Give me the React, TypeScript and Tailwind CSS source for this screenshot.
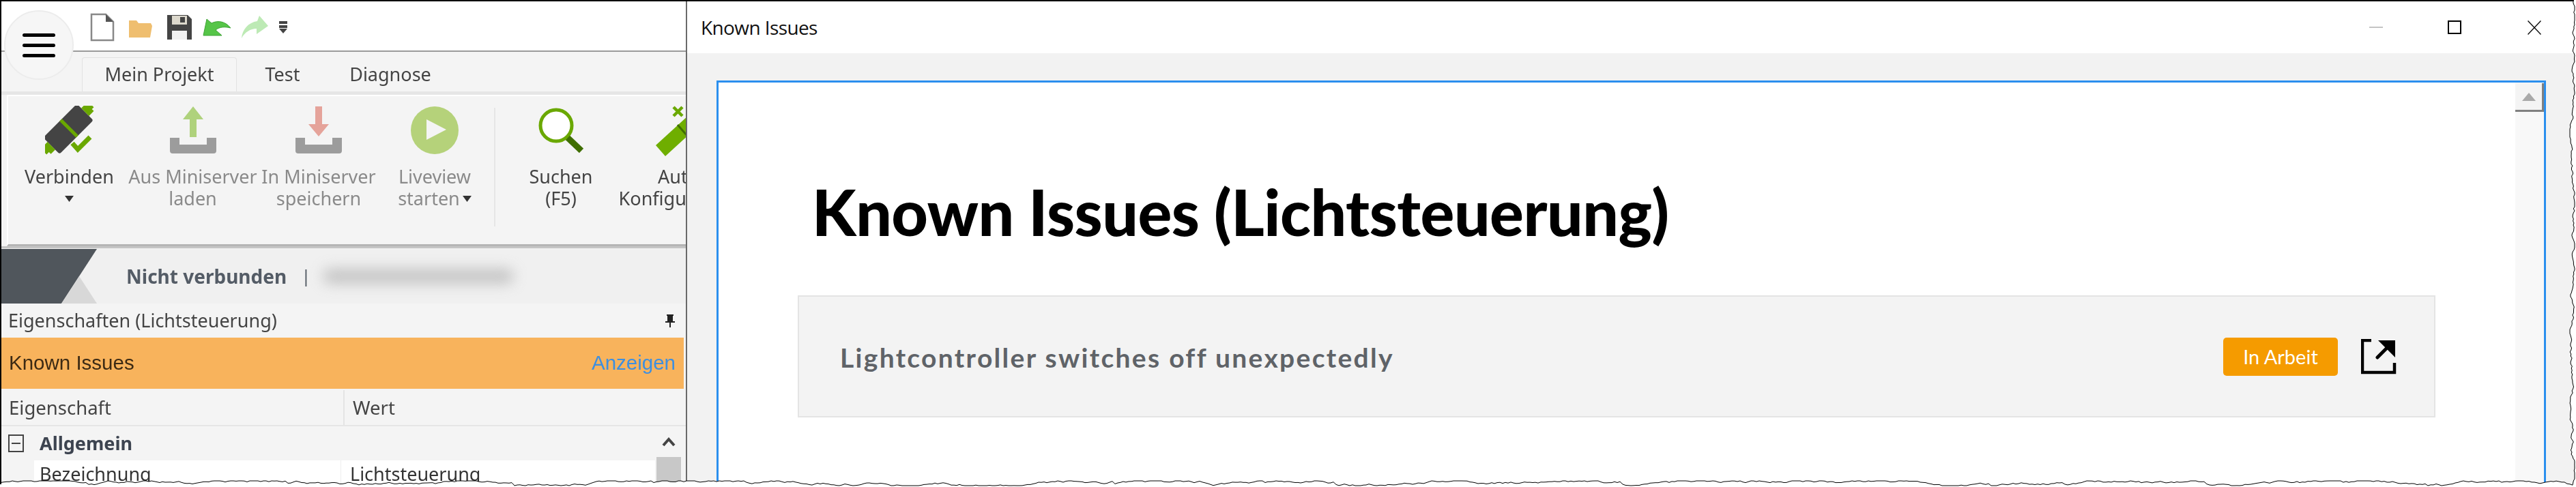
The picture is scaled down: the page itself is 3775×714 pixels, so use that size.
import React from "react";

const UI = "font-['Noto_Sans','Open_Sans',sans-serif]";

function tornPath() {
  let s = 12345;
  const r = () => {
    s = (s * 1103515245 + 12345) & 0x7fffffff;
    return s / 0x7fffffff;
  };
  let d = "M0 0 L3771 0 ";
  let x = 3771;
  for (let y = 0; y < 708; y += 3) {
    x += (r() - 0.5) * 4;
    x = Math.max(3766, Math.min(3773, x));
    d += `L${x.toFixed(1)} ${y} `;
  }
  let y = 710;
  for (let px = 3770; px > 0; px -= 4) {
    y += (r() - 0.5) * 3;
    if (r() > 0.95) y -= 3;
    y = Math.max(705, Math.min(712, y));
    d += `L${px} ${y.toFixed(1)} `;
  }
  d += "L0 710 Z";
  return d;
}

const Tray = () => (
  <path d="M2 1 V20 Q2 24 6 24 H66 Q70 24 70 20 V1 H56 V11 H16 V1 Z" fill="#9c9c9c" />
);

function RibbonButton({ icon, lines, dim, width, caret }: { icon: React.ReactNode; lines: string[]; dim?: boolean; width: string; caret?: boolean }) {
  return (
    <div className={`flex flex-col items-center shrink-0 ${width}`}>
      <div className="h-[88px] flex items-start justify-center">{icon}</div>
      <div className={`text-[27px] leading-[32px] text-center whitespace-nowrap ${dim ? "text-[#8a8a8a]" : "text-[#444]"}`}>
        {lines.map((l, i) => (
          <div key={i} className="h-[32px] flex items-center justify-center gap-1">
            {l}
            {caret && i === lines.length - 1 && (
              <svg width="13" height="9" viewBox="0 0 13 9"><path d="M0 0H13L6.5 9Z" fill="#333" /></svg>
            )}
          </div>
        ))}
      </div>
    </div>
  );
}

function LeftApp() {
  return (
    <div className={`w-[1003px] shrink-0 flex flex-col overflow-hidden bg-[#f4f4f4] ${UI} blur-[0.5px] relative`}>
      <div className="h-[74px] pt-[3px] bg-white border-b-2 border-[#9a9a9a] flex items-center pl-[130px] gap-[20px] shrink-0">
        <svg width="36" height="42" viewBox="0 0 36 42">
          <path d="M2 2 H23 L34 13 V40 H2 Z" fill="#fff" stroke="#888" strokeWidth="2.5" />
          <path d="M23 2 V13 H34 Z" fill="#555" />
        </svg>
        <svg width="36" height="28" viewBox="0 0 36 28" className="mt-1">
          <path d="M1 2 H12 L15 6 H33 L35 10 L32 27 H1 Z" fill="#efbe6f" />
        </svg>
        <svg width="38" height="38" viewBox="0 0 38 38">
          <path d="M1 1 H31 L37 7 V37 H1 Z" fill="#444" />
          <rect x="8" y="2" width="22" height="13" fill="#dcd8cc" />
          <rect x="20" y="4" width="7" height="8" fill="#444" />
          <rect x="8" y="24" width="22" height="13" fill="#f1f1f1" />
        </svg>
        <svg width="42" height="28" viewBox="0 0 42 28" className="-ml-[5px] mt-[2px]">
          <path d="M6 1 L1 25 L28 25 L19 17 C25 12 33 12 41 14 C34 5 23 2 13 7 Z" fill="#56c548" stroke="#3fa336" strokeWidth="1" />
        </svg>
        <svg width="42" height="36" viewBox="0 0 42 36" className="-ml-[7px]">
          <path d="M28 1 L41 16 L24 28 L24 20 C15 20 7 25 2 34 C3 21 12 11 25 9 Z" fill="#bdeab5" />
        </svg>
        <svg width="14" height="20" viewBox="0 0 14 20" className="-ml-[6px]">
          <rect x="1" y="1" width="12" height="4" fill="#444" />
          <rect x="1" y="7" width="12" height="4" fill="#444" />
          <path d="M1 12 H13 L7 19 Z" fill="#444" />
        </svg>
      </div>

      <div className="h-[58px] flex shrink-0 pl-[118px] text-[27px] text-[#444]">
        <div className="w-[227px] h-[50px] mt-[8px] bg-[#f5f5f5] border border-b-0 border-[#e2e2e2] rounded-t-[4px] flex items-center justify-center">Mein Projekt</div>
        <div className="w-[134px] mt-[8px] h-[50px] flex items-center justify-center">Test</div>
        <div className="w-[182px] mt-[8px] h-[50px] flex items-center justify-center">Diagnose</div>
      </div>

      <div className="h-[5px] bg-[#e6e6e6] shrink-0" />
      <div className="h-[222px] shrink-0 ml-[8px] border-l-2 border-t-2 border-white border-b-[3px] border-b-[#b5b5b5] flex pt-[14px]">
        <RibbonButton
          width="w-[179px]"
          lines={["Verbinden", ""]}
          caret
          icon={
            <svg width="72" height="72" viewBox="0 0 72 72">
              <g transform="rotate(45 34 34)">
                <rect x="17" y="-1" width="34" height="70" rx="3" fill="#444" />
                <rect x="17" y="30" width="34" height="5" fill="#6aa800" />
                <path d="M26 -1 V-11 H30 V-15 H38 V-11 H42 V-1 Z" fill="#6aa800" />
                <path d="M26 69 V78 H30 V83 H38 V78 H42 V69 Z" fill="#6aa800" />
              </g>
              <path d="M40 55 L48 64 L66 46" stroke="#6aa800" strokeWidth="7" fill="none" />
            </svg>
          }
        />
        <RibbonButton
          width="w-[183px]"
          dim
          lines={["Aus Miniserver", "laden"]}
          icon={
            <svg width="72" height="72" viewBox="0 0 72 72">
              <path d="M36 1 L51 20 H41 V46 H31 V20 H21 Z" fill="#afd27c" />
              <g transform="translate(0 46)"><Tray /></g>
            </svg>
          }
        />
        <RibbonButton
          width="w-[186px]"
          dim
          lines={["In Miniserver", "speichern"]}
          icon={
            <svg width="72" height="72" viewBox="0 0 72 72">
              <path d="M31 1 H41 V27 H51 L36 45 L21 27 H31 Z" fill="#e5a39a" />
              <g transform="translate(0 46)"><Tray /></g>
            </svg>
          }
        />
        <RibbonButton
          width="w-[154px]"
          dim
          caret
          lines={["Liveview", "starten"]}
          icon={
            <svg width="72" height="72" viewBox="0 0 72 72">
              <circle cx="36" cy="36" r="35" fill="#b5d27a" />
              <path d="M24 20 L53 35 L24 50 Z" fill="#f4f4f4" />
            </svg>
          }
        />
        <div className="w-[2px] h-[174px] bg-[#e6e6e6] ml-[10px] mt-[3px] shrink-0" />
        <RibbonButton
          width="w-[180px] ml-[6px]"
          lines={["Suchen", "(F5)"]}
          icon={
            <svg width="72" height="72" viewBox="0 0 72 72">
              <circle cx="29" cy="29" r="23" fill="#fff" stroke="#6aa800" strokeWidth="5" />
              <path d="M46 47 L66 66" stroke="#3f6e00" strokeWidth="9" />
            </svg>
          }
        />
        <RibbonButton
          width="w-[180px] -ml-[8px]"
          lines={["Auto", "Konfiguration"]}
          icon={
            <svg width="90" height="76" viewBox="0 0 90 76" className="-mt-[2px] ml-[16px]">
              <path d="M4 60 L50 18 L76 -4 L90 10 L18 76 Z" fill="#6fae00" />
              <path d="M36 30 L50 46" stroke="#3f6e00" strokeWidth="3" />
              <path d="M30 4 L43 17 M43 4 L30 17" stroke="#6aa800" strokeWidth="4.5" />
            </svg>
          }
        />
      </div>

      <div className="h-[3px] bg-[#c4c4c4] shrink-0" />
      <div className="h-[81px] bg-[#f0f0f0] flex items-center shrink-0">
        <svg width="143" height="81" viewBox="0 0 143 81" className="shrink-0 -ml-[2px]">
          <path d="M0 1 H142 L90 81 H0 Z" fill="#50565c" />
          <path d="M116 41 L142 81 H90 Z" fill="#d8d8d8" />
        </svg>
        <div className="ml-[42px] text-[28px] font-bold text-[#545c66] whitespace-nowrap">Nicht verbunden</div>
        <div className="ml-[21px] text-[26px] text-[#545c66]">|</div>
        <div className="ml-[18px] w-[280px] h-[22px] bg-[#b9b9b9] rounded-full blur-[10px] opacity-80" />
      </div>

      <div className="h-[50px] flex items-center justify-between pl-[10px] pr-[14px] text-[27px] text-[#444] shrink-0">
        <span>Eigenschaften (Lichtsteuerung)</span>
        <svg width="18" height="20" viewBox="0 0 18 20">
          <path d="M4 1 H14 V3 H13 V11 H16 V13 H10 V20 H8 V13 H2 V11 H5 V3 H4 Z" fill="#222" />
        </svg>
      </div>

      <div className="h-[75px] mr-[3px] bg-[#f8b35c] flex items-center justify-between pl-[11px] pr-[12px] font-['Liberation_Sans',sans-serif] text-[29.5px] shrink-0">
        <span className="text-[#3c2a14]">Known Issues</span>
        <span className="text-[#3d8fe0]">Anzeigen</span>
      </div>

      <div className="h-[55px] pt-[2px] flex items-center text-[27.5px] text-[#444] border-b-2 border-[#e6e6e6] shrink-0">
        <div className="w-[503px] pl-[11px] h-full flex items-center border-r-2 border-[#e4e4e4]">Eigenschaft</div>
        <div className="pl-[12px]">Wert</div>
      </div>

      <div className="flex flex-1 min-h-0">
        <div className="w-[958px] shrink-0">
          <div className="h-[50px] flex items-center pl-[10px] text-[#444]">
            <svg width="24" height="28" viewBox="0 0 24 28"><rect x="1" y="2" width="21" height="24" fill="none" stroke="#444" strokeWidth="2" /><path d="M5 14 H18" stroke="#444" strokeWidth="2" /></svg>
            <span className="ml-[22px] text-[27px] font-bold text-[#3d4450]">Allgemein</span>
          </div>
          <div className="ml-[48px] bg-white h-[50px] flex text-[27px] text-[#333] leading-[40px]">
            <div className="w-[450px] pl-[8px] border-r border-[#eee]">Bezeichnung</div>
            <div className="pl-[13px]">Lichtsteuerung</div>
          </div>
        </div>
        <div className="flex-1 flex flex-col items-center">
          <div className="h-[45px] flex items-center">
            <svg width="20" height="14" viewBox="0 0 20 14"><path d="M2 12 L10 3 L18 12" stroke="#444" strokeWidth="4" fill="none" /></svg>
          </div>
          <div className="w-[36px] flex-1 bg-[#c8c8c8]" />
        </div>
        <div className="w-[5px] shrink-0" />
      </div>

      <div className="absolute left-[4px] top-[13px] w-[102px] h-[102px] rounded-full bg-[#f6f6f6] border-2 border-[#ececec] flex flex-col items-center justify-center gap-[10px]">
        <div className="w-[48px] h-[5px] rounded-full bg-black" />
        <div className="w-[48px] h-[5px] rounded-full bg-black" />
        <div className="w-[48px] h-[5px] rounded-full bg-black" />
      </div>
    </div>
  );
}

function KnownIssuesWindow() {
  return (
    <div className={`w-[2770px] shrink-0 border-l-2 border-[#6a6a6a] flex flex-col ${UI}`}>
      <div className="h-[76px] bg-white flex items-center shrink-0">
        <span className="ml-[20px] text-[28px] text-[#111] font-['Open_Sans',sans-serif] tracking-[-0.6px]">Known Issues</span>
        <div className="ml-auto flex items-center mr-[51px]">
          <div className="w-[20px] h-[2px] bg-[#c4c4c4]" />
          <div className="w-[20px] h-[20px] border-2 border-black ml-[95px]" />
          <svg width="20" height="21" viewBox="0 0 20 21" className="ml-[97px]"><path d="M0.5 0.5 L19.5 20.5 M19.5 0.5 L0.5 20.5" stroke="#111" strokeWidth="1.5" /></svg>
        </div>
      </div>
      <div className="flex-1 bg-[#f2f2f2] pl-[43px] pt-[40px] min-h-0">
        <div className="w-[2681px] h-[700px] border-[3px] border-[#2b8fee] bg-white flex">
          <div className="flex-1 font-['Lato',sans-serif]">
            <h1 className="ml-[137px] mt-[134px] text-[93px] leading-[110px] font-black text-black whitespace-nowrap tracking-[-0.5px]">Known Issues (Lichtsteuerung)</h1>
            <div className="ml-[116px] w-[2400px] mt-[68px] h-[179px] bg-[#f3f3f3] border-2 border-[#e4e4e4] flex items-center">
              <span className="ml-[60px] mt-[3px] text-[39px] font-bold text-[#5f6368] tracking-[2.3px] whitespace-nowrap">Lightcontroller switches off unexpectedly</span>
              <div className="ml-auto w-[168px] h-[56px] rounded-[5px] bg-[#f59b00] text-white text-[29px] flex items-center justify-center">In Arbeit</div>
              <svg width="52" height="52" viewBox="0 0 52 52" className="ml-[34px] mr-[55px]">
                <path d="M15 2 H2 V49 H49 V35" fill="none" stroke="#000" strokeWidth="4.5" />
                <path d="M25 2 H50 V27 Z" fill="#000" />
                <path d="M24 27 L38 13" stroke="#000" strokeWidth="5" strokeLinecap="round" />
              </svg>
            </div>
          </div>
          <div className="w-[42px] shrink-0 bg-[#f8f8f8] flex flex-col">
            <div className="h-[42px] mt-[1px] bg-[#f4f4f4] border-r-[3px] border-b-[3px] border-[#808080] flex items-center justify-center">
              <svg width="20" height="12" viewBox="0 0 20 12"><path d="M10 0 L20 12 H0 Z" fill="#a9a9a9" /></svg>
            </div>
          </div>
        </div>
      </div>
    </div>
  );
}

export default function App() {
  return (
    <div className="w-[3775px] h-[714px] bg-white overflow-hidden relative">
      <div className="h-full flex border-t-2 border-l-2 border-black">
        <LeftApp />
        <KnownIssuesWindow />
      </div>
      <svg width="3775" height="714" viewBox="0 0 3775 714" className="absolute left-0 top-0">
        <path d={`M-5 -5 H3780 V720 H-5 Z ${tornPath()}`} fill="#fff" fillRule="evenodd" />
        <path d={tornPath()} fill="none" stroke="#000" strokeWidth="1" />
        <path d="M0 1 H3771 M1 0 V710" stroke="#000" strokeWidth="2" fill="none" />
      </svg>
    </div>
  );
}
